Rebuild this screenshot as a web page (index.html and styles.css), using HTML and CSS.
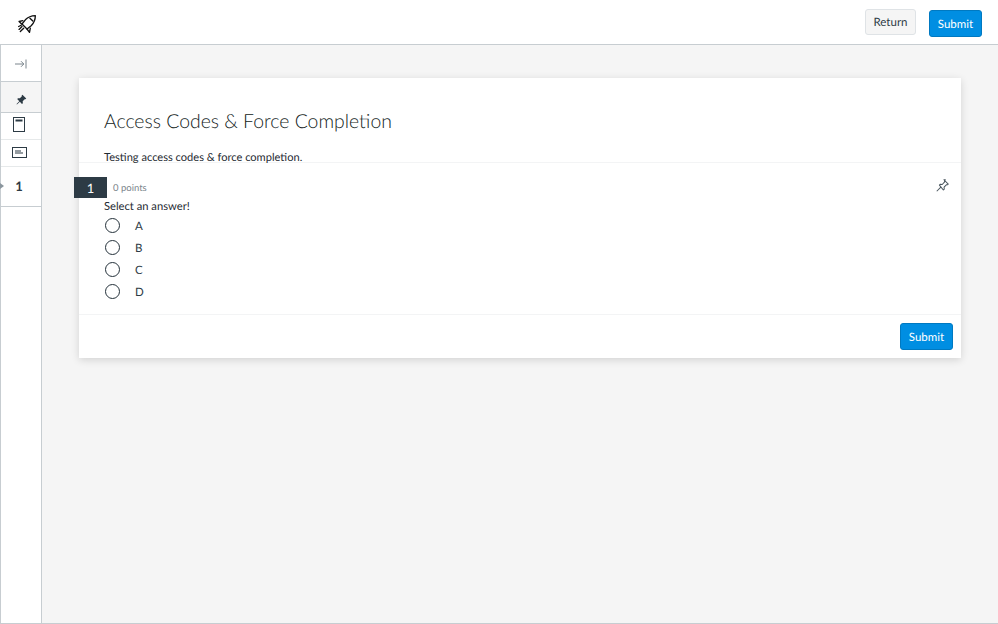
FILE: index.html
```html
<!DOCTYPE html>
<html lang="en">
<head>
<meta charset="utf-8">
<title>Access Codes &amp; Force Completion</title>
<link rel="stylesheet" href="styles.css">
</head>
<body>
<header class="topbar">
  <svg class="logo" viewBox="0 0 24 24" width="20" height="20" fill="none" stroke="#111" stroke-width="1.6" stroke-linejoin="round" stroke-linecap="round">
    <path d="M22 2c-5 .2-9 2-12 5L6 12l6 6 5-4c3-3 5-7 5-12Z"/>
    <path d="M7 8 2.500 9l3 3M16 17l-1 5-3-4"/>
    <path d="M15.500 5 19 8.500"/>
    <path d="M6 15l-3.500 3.500M8 17l-4 4M5 13.500 2 15"/>
  </svg>
  <div class="actions">
    <button class="btn btn-return">Return</button>
    <button class="btn btn-primary btn-top">Submit</button>
  </div>
</header>
<div class="main">
  <nav class="rail">
    <div class="rail-item rail-expand">
      <svg viewBox="0 0 12 10" width="12" height="10" fill="none" stroke="#6b7780" stroke-width=".9"><path d="M0 5h8.500M6 2.200 8.800 5 6 7.800M11 .5v9"/></svg>
    </div>
    <div class="rail-item rail-pin">
      <svg viewBox="0 0 12 12" width="11" height="11" fill="#2d3b45"><path d="M7 .8l4.200 4.200-1 .8-.7-.2L7.300 8l.2 2-1 .8L4.200 8.500 1 11.500.6 11l3-3.200L1.300 5.500l.9-1 2 .2 2.200-2.200-.2-.8Z"/></svg>
    </div>
    <div class="rail-item rail-book">
      <svg viewBox="0 0 12 15" width="12" height="15" fill="none" stroke="#2d3b45" stroke-width="1"><rect x=".5" y=".5" width="11" height="14" fill="#fff"/><rect x="2.500" y="2.500" width="7" height="2" fill="#2d3b45" stroke="none"/></svg>
    </div>
    <div class="rail-item rail-text">
      <svg viewBox="0 0 15 11" width="15" height="11" fill="none" stroke="#2d3b45" stroke-width="1"><rect x=".5" y=".5" width="14" height="10"/><path d="M3 4h6M3 6h8" stroke-width="1.200"/></svg>
    </div>
    <div class="rail-item rail-number"><span class="rail-dot"></span>1</div>
  </nav>
  <main class="content">
    <section class="card">
      <div class="intro">
        <h1 class="title">Access Codes &amp; Force Completion</h1>
        <p class="desc">Testing access codes &amp; force completion.</p>
      </div>
      <div class="question">
        <div class="q-head">
          <span class="q-number">1</span>
          <span class="q-points">0 points</span>
          <svg class="q-pin" viewBox="0 0 14 14" width="13" height="13" fill="none" stroke="#4a565e" stroke-width="1.100" stroke-linejoin="round"><path d="M8.500.8l4.700 4.700-1 .8-.8-.2-2.700 2.700.2 2-1 1L3.700 6.600l1-1 2 .3 2.600-2.800-.1-.9 .8-1.400ZM5.500 8.500.8 13.200"/></svg>
        </div>
        <p class="q-text">Select an answer!</p>
        <ul class="answers">
          <li class="answer"><span class="radio"></span><span class="answer-label">A</span></li>
          <li class="answer"><span class="radio"></span><span class="answer-label">B</span></li>
          <li class="answer"><span class="radio"></span><span class="answer-label">C</span></li>
          <li class="answer"><span class="radio"></span><span class="answer-label">D</span></li>
        </ul>
      </div>
      <div class="card-foot"><button class="btn btn-primary">Submit</button></div>
    </section>
  </main>
</div>
</body>
</html>
```

FILE: styles.css
```css
* { box-sizing: border-box; }
html, body { margin: 0; height: 100%; }
body {
  font-family: Lato, "Liberation Sans", sans-serif;
  color: #2d3b45;
  background: #fff;
  display: flex;
  flex-direction: column;
  height: 624px;
  overflow: hidden;
  text-rendering: geometricPrecision;
}
.topbar {
  height: 45px;
  flex: none;
  display: flex;
  align-items: center;
  justify-content: space-between;
  padding: 0 16px 0 17px;
  background: #fff;
  border-bottom: 1px solid #c7cdd1;
}
.logo { display: block; margin-top: 4px; }
.actions { display: flex; align-items: flex-start; gap: 13px; margin-top: 3px; }
.btn {
  font-family: inherit;
  font-size: 11.500px;
  border-radius: 3px;
  padding: 0;
  cursor: pointer;
  text-rendering: geometricPrecision;
}
.btn-return {
  width: 51px;
  height: 26px;
  margin-top: -1px;
  color: #2d3b45;
  background: #f5f5f5;
  border: 1px solid #dfe3e6;
}
.btn-primary {
  width: 53px;
  height: 27px;
  color: #fff;
  background: #008ee2;
  border: 1px solid #0079c1;
  padding-top: 1px;
}
.main { flex: 1; display: flex; min-height: 0; }
.rail {
  width: 42px;
  flex: none;
  background: #fff;
  border-left: 1px solid #c7cdd1;
  border-right: 1px solid #c7cdd1;
  border-bottom: 1px solid #c7cdd1;
}
.rail-item {
  display: flex;
  align-items: center;
  justify-content: center;
  border-bottom: 1px solid #c7cdd1;
}
.rail-expand { height: 37px; padding-top: 2px; }
.rail-pin { height: 31px; background: #f5f5f5; padding-top: 4px; padding-left: 1px; }
.rail-book { height: 27px; border-bottom-color: #e6e9ea; padding-right: 4px; padding-bottom: 3px; }
.rail-text { height: 27px; border-bottom-color: #e6e9ea; padding-right: 3px; padding-bottom: 2px; }
.rail-number {
  height: 40px;
  position: relative;
  font-size: 13px;
  font-weight: 700;
  padding-right: 4px;
  padding-bottom: 2px;
}
.rail-dot {
  position: absolute;
  left: -1px;
  top: 16px;
  width: 4px;
  height: 6px;
  background: #8b969e;
  clip-path: polygon(0 0, 100% 50%, 0 100%);
}
.content {
  flex: 1;
  background: #f5f5f5;
  padding: 33px 37px 0 37px;
  border-bottom: 1px solid #c7cdd1;
}
.card {
  background: #fff;
  box-shadow: 0 2px 8px rgba(0,0,0,.14);
  height: 280px;
  display: flex;
  flex-direction: column;
}
.intro { height: 85px; padding: 31px 25px 0; border-bottom: 1px solid #f3f4f5; }
.title { margin: 0; font-size: 19.400px; line-height: 26px; font-weight: 300; color: #111a20; }
.desc { margin: 15px 0 0; font-size: 11.080px; line-height: 16px; color: #1f2b33; }
.question { flex: 1; padding: 14px 10px 0 26px; border-bottom: 1px solid #f3f4f5; }
.q-head { display: flex; align-items: center; height: 21px; position: relative; }
.q-number {
  position: absolute;
  left: -31px;
  top: 0;
  width: 33px;
  height: 21px;
  background: #2d3b45;
  color: #fff;
  font-size: 13px;
  display: flex;
  align-items: center;
  justify-content: center;
}
.q-points { margin-left: 8px; margin-top: 2px; font-size: 9.500px; color: #7b858c; }
.q-pin { margin-left: auto; margin-top: -4px; margin-right: 2px; }
.q-text { margin: 1px 0 -1px -1px; font-size: 11.200px; line-height: 16px; color: #1f2b33; }
.answers { list-style: none; margin: 0; padding: 0; }
.answer { display: flex; align-items: center; height: 22px; font-size: 11.500px; }
.answer-label { margin-top: 2px; }
.radio {
  width: 15px;
  height: 15px;
  border: 1.700px solid #24313a;
  border-radius: 50%;
  margin-right: 15px;
}
.card-foot { height: 43px; display: flex; justify-content: flex-end; align-items: center; padding-right: 8px; }
```
